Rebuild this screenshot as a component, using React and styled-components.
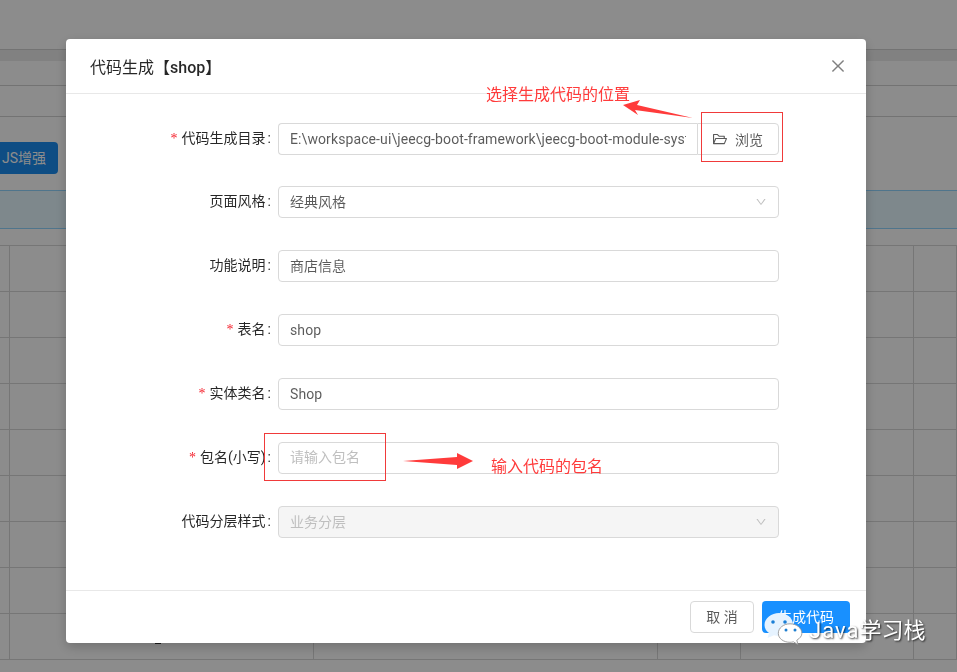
import React from "react";
import styled, { createGlobalStyle } from "styled-components";
import { AiOutlineClose, AiOutlineDown, AiOutlineFolderOpen } from "react-icons/ai";

const FONT = `Roboto, "Noto Sans CJK SC", sans-serif`;

const GlobalStyle = createGlobalStyle`
    html, body {
        margin: 0;
        padding: 0;
        height: 100%;
        overflow: hidden;
        background: #fff;
        font-family: ${FONT};
    }
    * {
        box-sizing: border-box;
    }
`;

const tableColumns = [10, 304, 344, 83, 173, 43];
const tableRows = [0, 1, 2, 3, 4, 5, 6, 7, 8];

export default function App() {
    return (
        <>
            <GlobalStyle />
            <Page>
                <TopBar />
                <TabBand />
                <NavRow $height={25} />
                <NavRow $height={31} />
                <Toolbar>
                    <EnhanceButton>JS增强</EnhanceButton>
                </Toolbar>
                <AlertBand />
                <Table>
                    {tableRows.map((row) => (
                        <TableRow key={row}>
                            {tableColumns.map((width, i) => (
                                <TableCell key={i} style={{ width }} />
                            ))}
                        </TableRow>
                    ))}
                </Table>
                <CellMark />
            </Page>

            <Mask>
                <Modal>
                    <ModalHeader>
                        <ModalTitle>
                            代码生成【<TableName>shop</TableName>】
                        </ModalTitle>
                        <CloseIcon />
                    </ModalHeader>
                    <ModalBody>
                        <FormRow>
                            <FormLabel $required>代码生成目录</FormLabel>
                            <InputGroup>
                                <GroupInput
                                    $latin
                                    readOnly
                                    value="E:\workspace-ui\jeecg-boot-framework\jeecg-boot-module-system\src\main\java"
                                />
                                <BrowseButton>
                                    <AiOutlineFolderOpen size={16} />
                                    浏览
                                </BrowseButton>
                            </InputGroup>
                        </FormRow>
                        <FormRow>
                            <FormLabel>页面风格</FormLabel>
                            <Select>
                                经典风格
                                <SelectArrow />
                            </Select>
                        </FormRow>
                        <FormRow>
                            <FormLabel>功能说明</FormLabel>
                            <Input readOnly value="商店信息" />
                        </FormRow>
                        <FormRow>
                            <FormLabel $required>表名</FormLabel>
                            <Input $latin readOnly value="shop" />
                        </FormRow>
                        <FormRow>
                            <FormLabel $required>实体类名</FormLabel>
                            <Input $latin readOnly value="Shop" />
                        </FormRow>
                        <FormRow>
                            <FormLabel $required>包名(小写)</FormLabel>
                            <Input readOnly placeholder="请输入包名" />
                        </FormRow>
                        <FormRow>
                            <FormLabel>代码分层样式</FormLabel>
                            <Select $disabled>
                                业务分层
                                <SelectArrow />
                            </Select>
                        </FormRow>
                    </ModalBody>
                    <ModalFooter>
                        <CancelButton>取 消</CancelButton>
                        <PrimaryButton>生成代码</PrimaryButton>
                    </ModalFooter>
                </Modal>
            </Mask>

            {/* red notes drawn over the screenshot */}
            <NoteBox $left={701} $top={112} $width={82} $height={50} />
            <NoteBox $left={264} $top={433} $width={122} $height={48} />
            <NoteText $left={486} $top={83}>选择生成代码的位置</NoteText>
            <NoteText $left={491} $top={455}>输入代码的包名</NoteText>
            <NoteArrow $left={620} $top={98} width="76" height="22" viewBox="620 98 76 22">
                <path d="M623 105 L640 100 L637 105 L693 118 L635 110 L638 115 Z" />
            </NoteArrow>
            <NoteArrow $left={400} $top={450} width="76" height="22" viewBox="400 450 76 22">
                <path d="M403 461 L457 457 L457 453 L473 461 L457 469 L457 465 Z" />
            </NoteArrow>

            <Watermark>
                <WechatLogo width="38" height="34" viewBox="0 0 38 34">
                    <path
                        d="M14 2 C6.500 2 -0.500 7 -0.500 14 C-0.500 17.500 1.500 20.300 4 22 L2.500 27 L9 24.300 C10.500 24.800 12.500 25 14 25 C22 25 28 20 28 13.500 C28 7 22 2 14 2 Z"
                        fill="#e6f3ff"
                    />
                    <circle cx="8" cy="11" r="1.800" fill="#1a7fd6" />
                    <circle cx="20" cy="11" r="1.800" fill="#1a7fd6" />
                    <path
                        d="M25 12.800 C18.500 12.800 13.300 17 13.300 22.300 C13.300 27.500 18.500 31.300 25 31.300 C26.200 31.300 27.300 31.100 28.400 30.800 L33 33.700 L31.800 29.200 C34.800 27.400 36.900 25 36.900 22.300 C36.900 17 31.500 12.800 25 12.800 Z"
                        fill="#fff"
                        stroke="#8a8a8a"
                        strokeWidth="0.8"
                    />
                    <circle cx="21" cy="19" r="1.500" fill="#1f7fd0" />
                    <circle cx="30" cy="19" r="1.500" fill="#1f7fd0" />
                </WechatLogo>
                <WatermarkText>
                    <WatermarkLatin>Java</WatermarkLatin>学习栈
                </WatermarkText>
            </Watermark>
        </>
    );
}

const Page = styled.div`
    position: relative;
    height: 672px;
    overflow: hidden;
    background: #fff;
`;

const TopBar = styled.div`
    height: 49px;
`;

const TabBand = styled.div`
    height: 12px;
    background: #ececec;
    border-top: 1px solid #d2d2d2;
`;

const NavRow = styled.div`
    height: ${(p) => p.$height}px;
    border-bottom: 1px solid #d2d2d2;
`;

const Toolbar = styled.div`
    height: 73px;
    padding-top: 25px;
`;

const EnhanceButton = styled.div`
    width: 58px;
    height: 32px;
    line-height: 32px;
    padding-left: 2px;
    background: #1a8cf0;
    border-radius: 0 4px 4px 0;
    color: #fff;
    font-size: 14px;
    white-space: nowrap;
`;

const AlertBand = styled.div`
    height: 39px;
    background: #e6f7ff;
    border-top: 1px solid #91d5ff;
    border-bottom: 1px solid #91d5ff;
`;

const Table = styled.div`
    margin-top: 16px;
    border-top: 1px solid #d8d8d8;
`;

const TableRow = styled.div`
    display: flex;
    height: 46px;
    border-bottom: 1px solid #d8d8d8;
`;

const TableCell = styled.div`
    flex: none;
    height: 100%;
    border-right: 1px solid #d8d8d8;
`;

/* the foot of a cell text that shows below the dialog */
const CellMark = styled.div`
    position: absolute;
    left: 155px;
    top: 642px;
    width: 6px;
    height: 2px;
    background: #333;
`;

const Mask = styled.div`
    position: fixed;
    inset: 0;
    padding: 39px 91px 0 66px;
    background: rgba(0, 0, 0, 0.45);
`;

const Modal = styled.div`
    display: flex;
    flex-direction: column;
    width: 800px;
    height: 604px;
    background: #fff;
    border-radius: 4px;
    box-shadow: 0 4px 12px rgba(0, 0, 0, 0.2);
`;

const ModalHeader = styled.div`
    display: flex;
    align-items: center;
    justify-content: space-between;
    height: 55px;
    padding: 0 19px 0 24px;
    border-bottom: 1px solid #e8e8e8;
`;

const ModalTitle = styled.div`
    font-size: 16px;
    font-weight: 400;
    color: rgba(0, 0, 0, 0.85);
`;

const TableName = styled.span`
    font-weight: 500;
`;

const CloseIcon = styled(AiOutlineClose)`
    width: 18px;
    height: 18px;
    color: #808080;
`;

const ModalBody = styled.div`
    flex: 1;
    display: flex;
    flex-direction: column;
    gap: 32px;
    padding: 29px 0 0 24px;
`;

const FormRow = styled.div`
    display: grid;
    grid-template-columns: 188px 501px;
    height: 32px;
    &:first-child {
        margin-bottom: -1px;
    }
`;

const FormLabel = styled.label`
    justify-self: end;
    padding-right: 7px;
    line-height: 30px;
    font-size: 14px;
    color: rgba(0, 0, 0, 0.85);
    white-space: nowrap;
    &::before {
        content: ${(p) => (p.$required ? '"*"' : "none")};
        margin-right: 4px;
        color: #f5222d;
        font-family: "Liberation Serif", serif;
    }
    &::after {
        content: ":";
        margin: 0 0 0 2px;
    }
`;

const Input = styled.input`
    width: 100%;
    height: 32px;
    padding: 0 11px ${(p) => (p.$latin ? "0" : "2px")};
    border: 1px solid #d9d9d9;
    border-radius: 4px;
    outline: none;
    background: #fff;
    font-family: ${FONT};
    font-size: 14px;
    letter-spacing: ${(p) => (p.$latin ? "0.1px" : "0")};
    color: rgba(0, 0, 0, 0.65);
    &::placeholder {
        color: #bfbfbf;
    }
`;

const InputGroup = styled.div`
    display: flex;
`;

const GroupInput = styled(Input)`
    flex: 1;
    min-width: 0;
    border-right: none;
    border-radius: 4px 0 0 4px;
`;

const BrowseButton = styled.div`
    flex: none;
    display: flex;
    align-items: center;
    gap: 7px;
    width: 82px;
    height: 32px;
    padding-left: 14px;
    border: 1px solid #d9d9d9;
    border-radius: 0 4px 4px 0;
    font-size: 14px;
    color: rgba(0, 0, 0, 0.65);
`;

const Select = styled.div`
    display: flex;
    align-items: center;
    justify-content: space-between;
    height: 32px;
    padding: 0 11px 2px;
    border: 1px solid #d9d9d9;
    border-radius: 4px;
    background: ${(p) => (p.$disabled ? "#f5f5f5" : "#fff")};
    font-size: 14px;
    color: ${(p) => (p.$disabled ? "#bfbfbf" : "rgba(0, 0, 0, 0.65)")};
`;

const SelectArrow = styled(AiOutlineDown)`
    width: 12px;
    height: 12px;
    margin-top: 2px;
    color: #bfbfbf;
`;

const ModalFooter = styled.div`
    display: flex;
    justify-content: flex-end;
    gap: 8px;
    height: 53px;
    padding: 10px 16px;
    border-top: 1px solid #e8e8e8;
`;

const CancelButton = styled.div`
    width: 64px;
    height: 32px;
    line-height: 30px;
    text-align: center;
    border: 1px solid #d9d9d9;
    border-radius: 4px;
    font-size: 14px;
    color: rgba(0, 0, 0, 0.65);
`;

const PrimaryButton = styled.div`
    width: 88px;
    height: 32px;
    line-height: 32px;
    text-align: center;
    background: #1890ff;
    border-radius: 4px;
    font-size: 14px;
    color: #fff;
`;

const NoteBox = styled.div`
    position: fixed;
    left: ${(p) => p.$left}px;
    top: ${(p) => p.$top}px;
    width: ${(p) => p.$width}px;
    height: ${(p) => p.$height}px;
    border: 1px solid #f03a3a;
`;

const NoteText = styled.div`
    position: fixed;
    left: ${(p) => p.$left}px;
    top: ${(p) => p.$top}px;
    font-size: 16px;
    line-height: 24px;
    color: #ff3b3b;
    white-space: nowrap;
`;

const NoteArrow = styled.svg`
    position: fixed;
    left: ${(p) => p.$left}px;
    top: ${(p) => p.$top}px;
    fill: #ff3b3b;
`;

const Watermark = styled.div`
    position: fixed;
    left: 765px;
    top: 611px;
    display: flex;
    align-items: center;
    gap: 6px;
`;

const WechatLogo = styled.svg`
    flex: none;
    overflow: visible;
`;

const WatermarkText = styled.div`
    font-size: 22px;
    color: #fff;
    white-space: nowrap;
    text-shadow: 1px 1px 2px rgba(0, 0, 0, 0.75);
`;

const WatermarkLatin = styled.span`
    letter-spacing: 1px;
`;
